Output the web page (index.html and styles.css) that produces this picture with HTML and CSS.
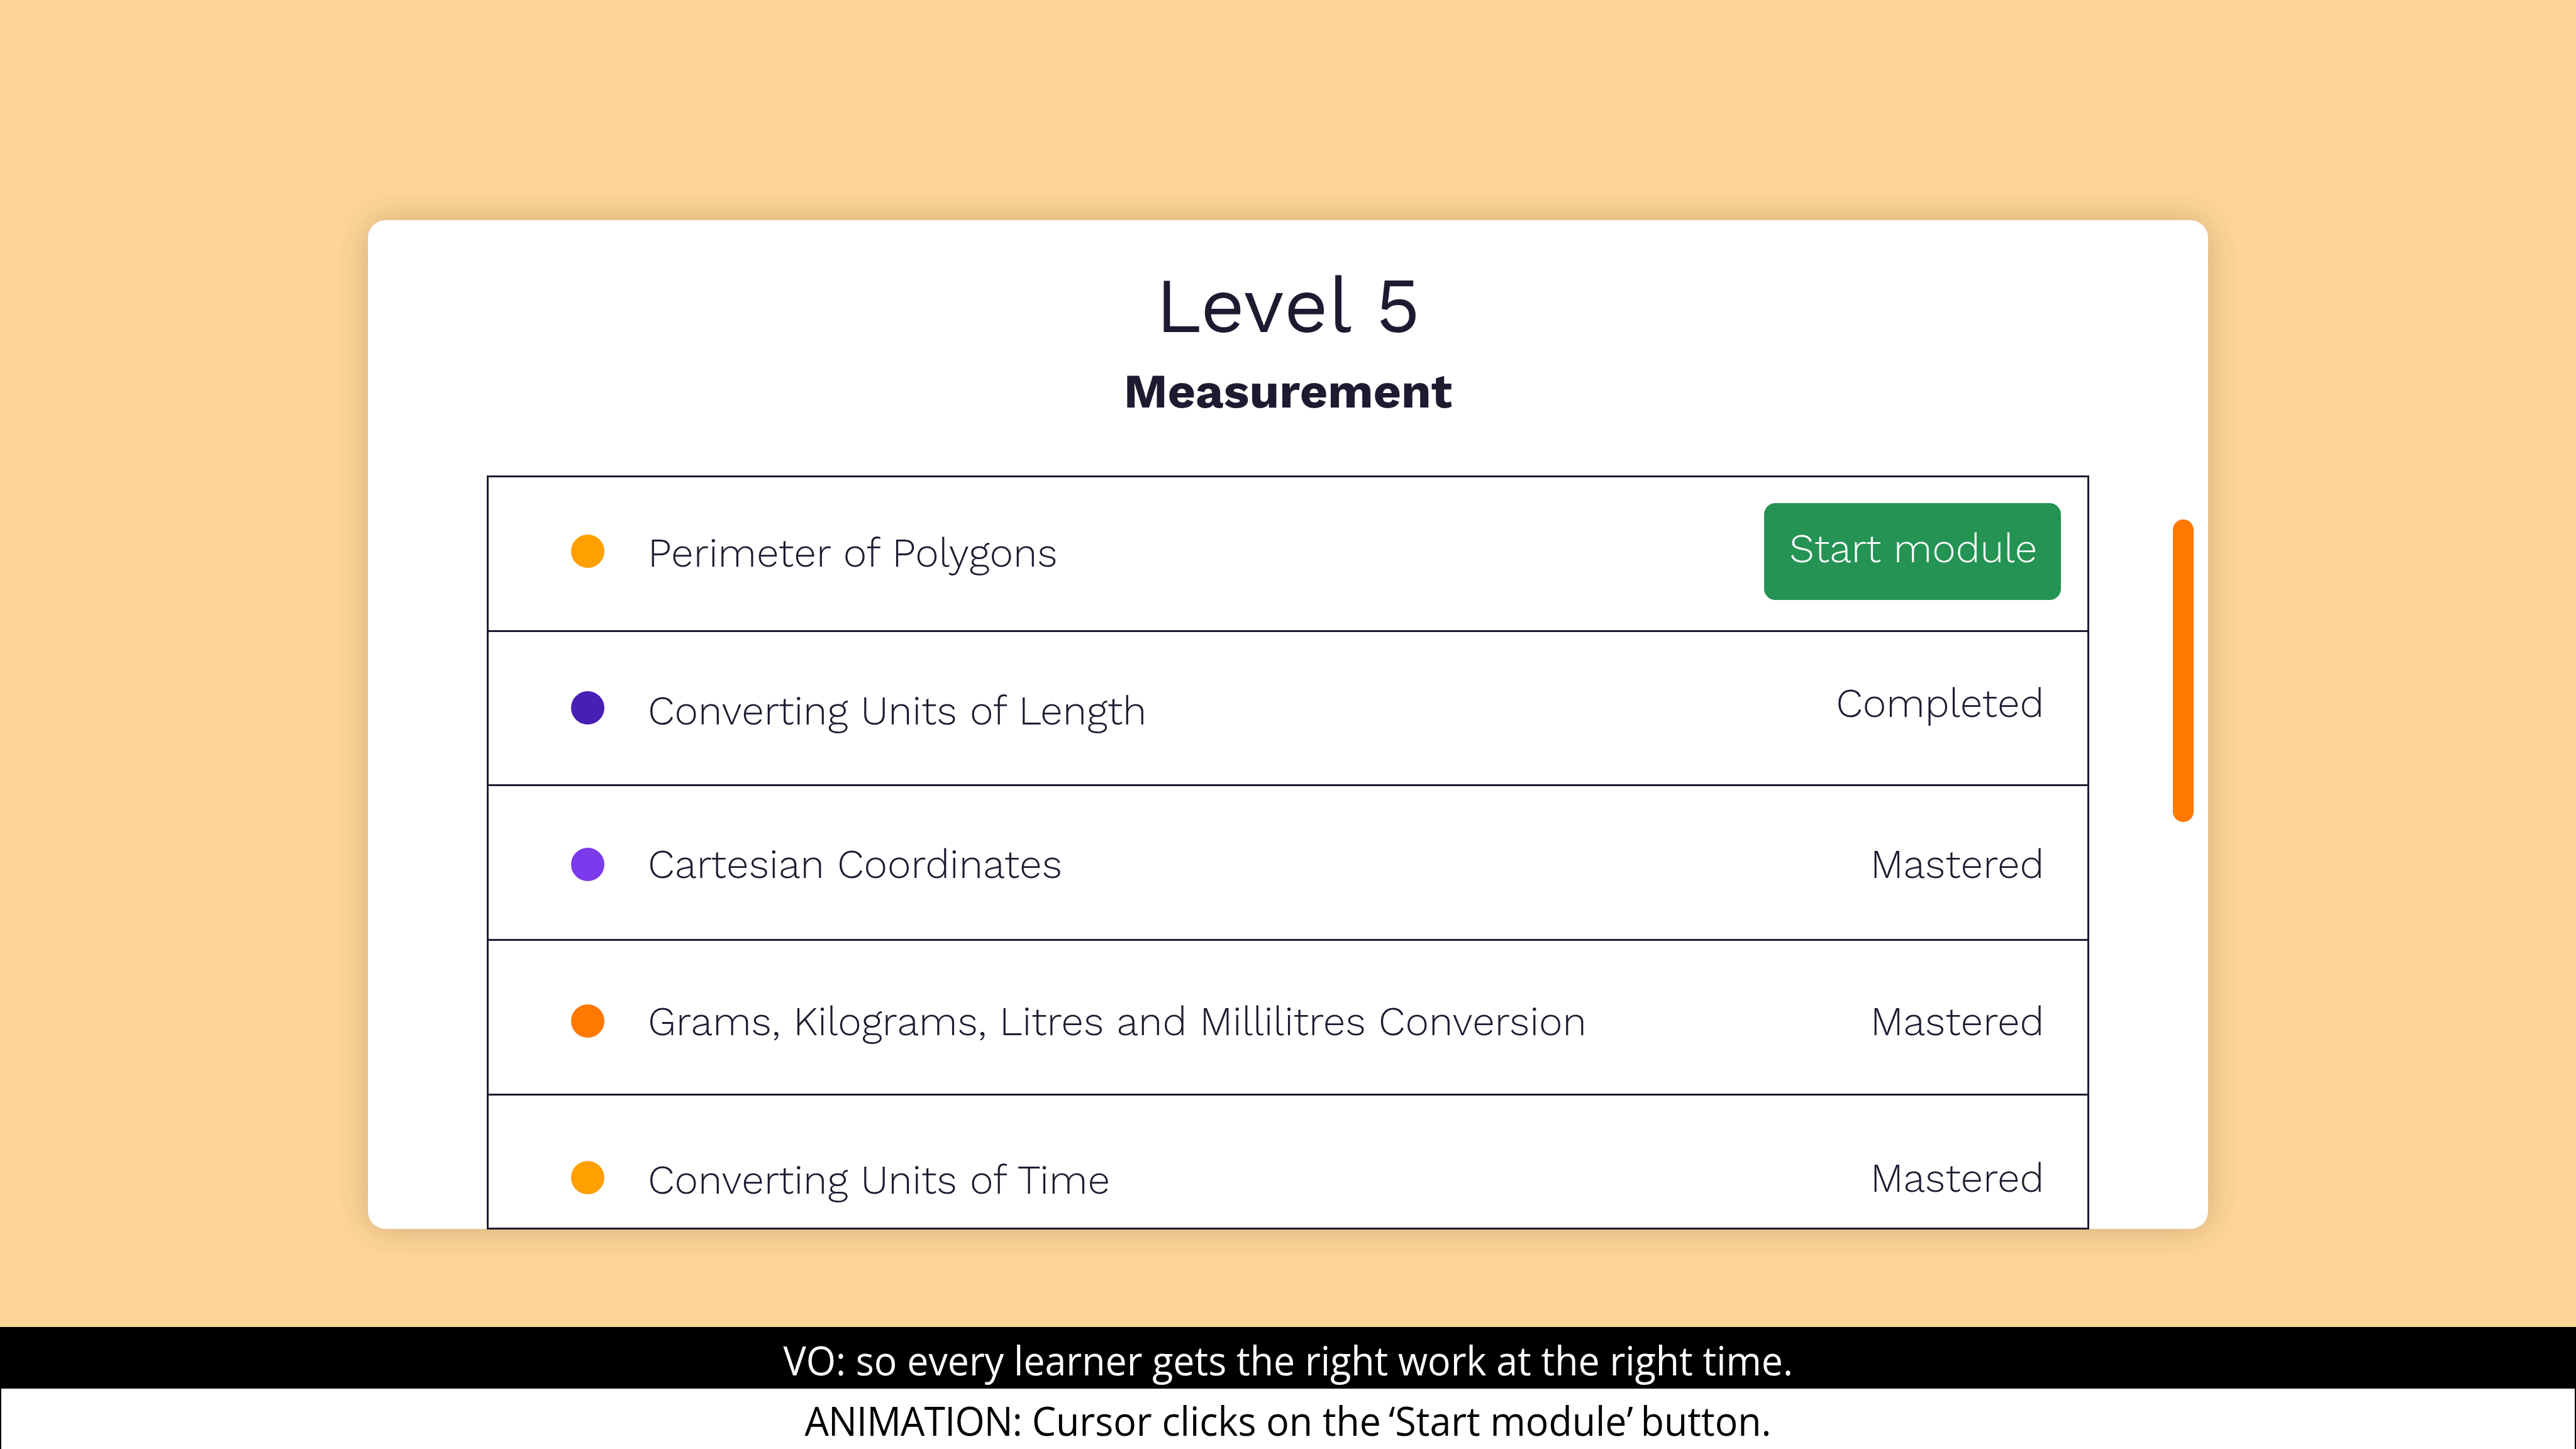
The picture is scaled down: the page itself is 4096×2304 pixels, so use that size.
FILE: index.html
```
<!DOCTYPE html>
<html lang="en">
<head>
  <meta charset="UTF-8" />
  <meta name="viewport" content="width=device-width, initial-scale=1.0"/>
  <title>Level 5 | Measurement</title>
  <link rel="stylesheet" href="styles.css">
</head>
<body>
  <main>
    <div class="card">
      <h1>Level 5</h1>
      <h2>Measurement</h2>
      <ul class="modules">
        <li class="module first">
          <span class="dot amber"></span>
          <span class="title">Perimeter of Polygons</span>
          <button class="start">Start module</button>
        </li>
        <li class="module second">
          <span class="dot indigo"></span>
          <span class="title">Converting Units of Length</span>
          <span class="status">Completed</span>
        </li>
        <li class="module third">
          <span class="dot violet"></span>
          <span class="title">Cartesian Coordinates</span>
          <span class="status">Mastered</span>
        </li>
        <li class="module fourth">
          <span class="dot orange"></span>
          <span class="title">Grams, Kilograms, Litres and Millilitres Conversion</span>
          <span class="status">Mastered</span>
        </li>
        <li class="module fifth">
          <span class="dot amber"></span>
          <span class="title">Converting Units of Time</span>
          <span class="status">Mastered</span>
        </li>
      </ul>
      <div class="scrollbar"></div>
    </div>
  </main>
  <footer>
    <div class="caption voice"><p>VO: so every learner gets the right work at the right time.</p></div>
    <div class="caption action"><p><span class="label">ANIMATION:</span> Cursor clicks on the <span class="quoted">‘Start module’</span> button.</p></div>
  </footer>
</body>
</html>
```
FILE: styles.css
```
:root {
  --bg: #fed698;
  --ink: #1e1a30;
  --green: #249353;
  --amber: #ff9f00;
  --orange: #ff7800;
  --indigo: #491eb5;
  --violet: #7c3aed;
}
* { margin: 0; padding: 0; box-sizing: border-box; }
body { width: 4096px; height: 2304px; overflow: hidden; display: flex; flex-direction: column; background: var(--bg); color: var(--ink); font-family: 'Work Sans', 'Open Sans', sans-serif; }
main { height: 2110.4px; flex: none; padding-top: 350.4px; }

.card { position: relative; width: 2926px; height: 1603.4px; margin: 0 auto; padding: 66px 189px 0; background: #fff; border-radius: 28px; box-shadow: 0 0 54px rgba(40,35,25,0.24); }
h1 { font-size: 122.6px; font-weight: 400; line-height: 140px; text-align: center; }
h2 { margin-top: 16px; font-size: 76.9px; font-weight: 700; line-height: 100px; text-align: center; }

/* Module list, cut off at the bottom of the card */
.modules { height: 1199px; margin-top: 83.6px; border: 3px solid var(--ink); border-top: none; list-style: none; overflow: hidden; }
.module { --dot: 91px; --title: 79.8px; --status: 73.4px; height: 245.7px; display: flex; align-items: flex-start; padding: 0 68.6px 0 131.4px; border-top: 3px solid var(--ink); font-size: 64px; font-weight: 300; line-height: 80px; white-space: nowrap; }
.second { --dot: 94.6px; --title: 85.8px; --status: 73.4px; }
.third { --dot: 97.6px; --title: 84px; --status: 84px; }
.fourth { --dot: 101.4px; --title: 88.2px; --status: 87.9px; }
.fifth { --dot: 104.6px; --title: 94.6px; --status: 91.6px; }
.dot { flex: none; width: 53px; height: 53px; margin-top: var(--dot); border-radius: 50%; }
.amber { background: var(--amber); }
.indigo { background: var(--indigo); }
.violet { background: var(--violet); }
.orange { background: var(--orange); }
.title { flex: 1; margin: var(--title) 0 0 68.6px; letter-spacing: 0.04px; }
.status { margin-top: var(--status); }
.start { width: 472px; height: 154px; margin: 40.8px -26.9px 0 0; padding: 31.6px 37px 42px 40px; border: none; border-radius: 18px; background: var(--green); color: #fff; font: inherit; text-align: left; cursor: pointer; }
.scrollbar { position: absolute; top: 476px; left: 2870px; width: 33px; height: 481px; border-radius: 17px; background: var(--orange); }

footer { flex: 1; display: flex; flex-direction: column; font-family: 'Open Sans', 'Noto Sans', sans-serif; font-size: 64.5px; text-align: center; white-space: nowrap; }
.caption { display: flex; justify-content: center; line-height: 98px; }
.caption p { transform: scaleX(0.943); }
.voice { height: 98px; padding-top: 3px; background: #000; color: #fff; }
.action { flex: 1; padding-top: 2px; border: 2px solid #000; border-top: none; background: #fff; color: #000; line-height: 97px; }
.label { letter-spacing: -0.9px; }
.quoted { margin: 0 -4px; }
```
